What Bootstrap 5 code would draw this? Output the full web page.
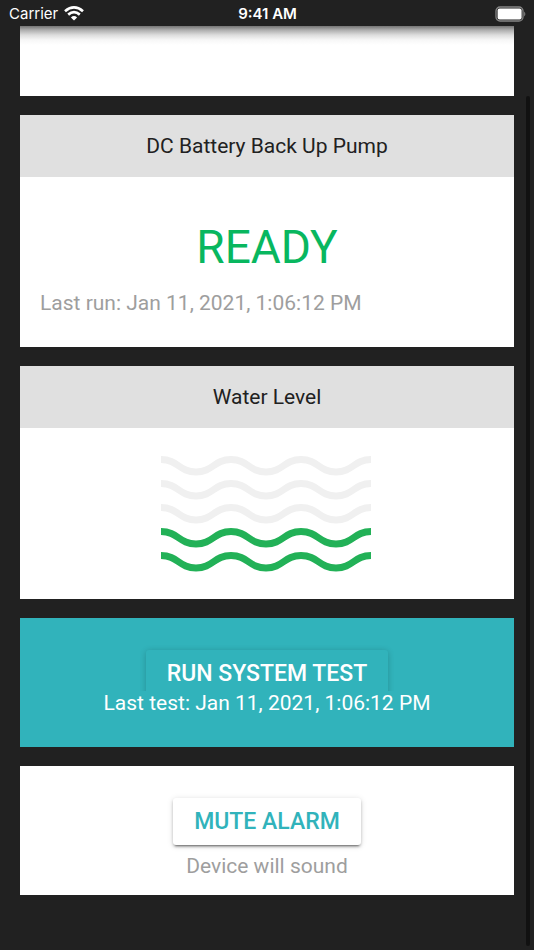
<!DOCTYPE html>
<html lang="en">
<head>
<meta charset="utf-8">
<meta name="viewport" content="width=device-width, initial-scale=1">
<title>Pump Monitor</title>
<link href="https://cdn.jsdelivr.net/npm/bootstrap@5.3.0/dist/css/bootstrap.min.css" rel="stylesheet">
<style>
  body { background: #212121; color: #212121; font-family: Roboto, sans-serif; font-size: 21px; line-height: 24px; overflow: hidden; }
  .status-bar { height: 26px; background: #212121; color: #fff; font-family: Inter, sans-serif; font-size: 15px; line-height: 26px; padding: 1px 8px 0 9px; }
  .status-bar time { font-weight: 600; }
  .panels { gap: 19px; padding: 0 20px 54px; }
  .panel { background: #fff; border: 0; border-radius: 0; }
  .panel-top { height: 70px; background: linear-gradient(#747474, #adadad 4px, #dcdcdc 9px, #f7f7f7 14px, #fff 19px); }
  .panel-title { background: #e0e0e0; border: 0; border-radius: 0 !important; padding: 19px 20px; font-size: 21px; line-height: 24px; font-weight: 400; margin: 0; }
  .pump-body { padding: 42px 20px 32px; }
  .pump-state { color: #08b75f; font-size: 46px; line-height: 56px; margin-bottom: 16px; }
  .note { color: #9e9e9e; }
  .level-body { padding: 27px 22px 24px 20px; }
  .level-body svg { width: 210px; height: 120px; }
  .action-panel { padding: 32px 20px 17px; }
  .action-panel.teal { background: #31b3bb; color: #fff; padding-bottom: 25px; }
  .raised { border: 0; border-radius: 3px; padding: 11px 21px; font-size: 23px; line-height: 25px; font-weight: 500; box-shadow: 0 3px 2px -2px #0006, 0 2px 3px #0003, 0 1px 6px #0002; }
  .mute, .mute:hover { color: #31b3bb; background: #fff; }
  .teal .raised, .teal .raised:hover { color: #fff; background: #31b3bb; }
  .teal .raised { box-shadow: 0 1px 6px #0003; }
  .test-note { background: #31b3bb; margin-top: -6px; padding-bottom: 7px; z-index: 1; }
  .mute-note { margin-top: 9px; }
  .scroll-track { position: fixed; right: 4px; top: 96px; bottom: 4px; width: 4px; border-radius: 2px; background: #111; }
</style>
<script src="https://cdn.jsdelivr.net/npm/bootstrap@5.3.0/dist/js/bootstrap.bundle.min.js"></script>
</head>
<body>
<header class="status-bar d-flex align-items-center">
  <div class="col d-flex align-items-center gap-1">
    <span>Carrier</span>
    <svg width="22" height="15" viewBox="-2 0 22 15" fill="none" stroke="#fff" stroke-width="2.7" aria-hidden="true"><path d="M1 5.2Q10-2.4 19 5.2M4.2 8.6Q10 3.7 15.8 8.6"/><path d="M10 14.5 6.9 11.4Q10 8.8 13.1 11.4Z" fill="#fff" stroke="none"/></svg>
  </div>
  <time>9:41 AM</time>
  <div class="col d-flex justify-content-end">
    <svg width="31" height="16" viewBox="0 0 31 16" aria-label="Battery full"><rect x="1" y="1" width="27" height="14" rx="4" fill="none" stroke="#858585" stroke-width="1.3"/><rect x="2.6" y="2.6" width="24" height="10.8" rx="2" fill="#fff"/><path d="M29.2 5.5Q31.5 8 29.2 10.5Z" fill="#858585"/></svg>
  </div>
</header>
<main class="panels d-flex flex-column">
  <section class="card panel panel-top" aria-hidden="true"></section>

  <section class="card panel">
    <h2 class="card-header panel-title text-center">DC Battery Back Up Pump</h2>
    <div class="card-body pump-body">
      <div class="pump-state text-center">READY</div>
      <div class="note">Last run: Jan 11, 2021, 1:06:12 PM</div>
    </div>
  </section>

  <section class="card panel">
    <h2 class="card-header panel-title text-center">Water Level</h2>
    <div class="card-body level-body d-flex justify-content-center">
      <svg viewBox="0 0 210 120" role="img" aria-label="Water level 2 of 5" fill="none" stroke="#f0f0f0" stroke-width="7">
        <defs><path id="wave" d="M0 4.5C17 4.5 18 17 35 17S53 4.5 70 4.5 88 17 105 17 123 4.5 140 4.5 158 17 175 17 193 4.5 210 4.5"/></defs>
        <use href="#wave"/><use href="#wave" y="24"/><use href="#wave" y="48"/>
        <g stroke="#22b157"><use href="#wave" y="72"/><use href="#wave" y="96"/></g>
      </svg>
    </div>
  </section>

  <section class="card panel action-panel teal align-items-center">
    <button type="button" class="btn raised">RUN SYSTEM TEST</button>
    <div class="test-note position-relative align-self-stretch text-center">Last test: Jan 11, 2021, 1:06:12 PM</div>
  </section>

  <section class="card panel action-panel align-items-center">
    <button type="button" class="btn raised mute">MUTE ALARM</button>
    <div class="note mute-note">Device will sound</div>
  </section>
</main>
<div class="scroll-track" aria-hidden="true"></div>
</body>
</html>
